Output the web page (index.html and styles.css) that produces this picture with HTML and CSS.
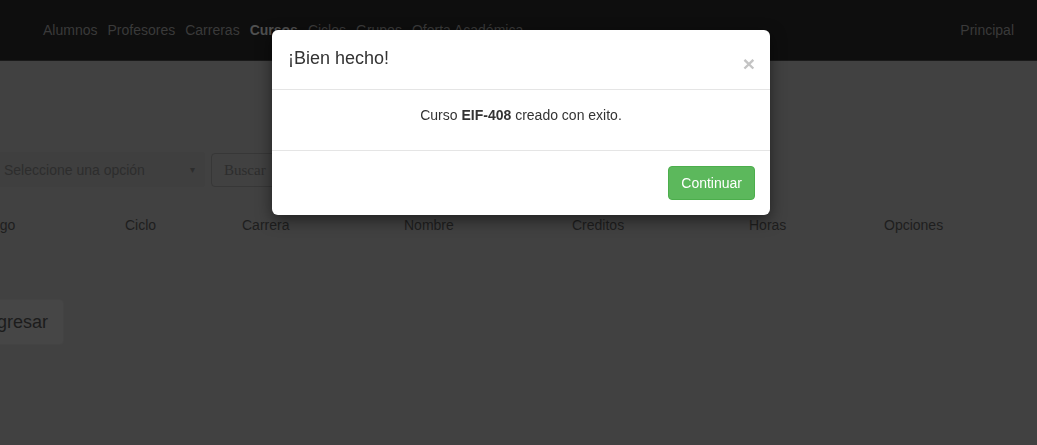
FILE: index.html
```html
<!DOCTYPE html>
<html lang="es">
<head>
<meta charset="utf-8">
<title>Cursos</title>
<link rel="stylesheet" href="styles.css">
</head>
<body>
<nav class="navbar">
  <ul class="nav-links">
    <li><a href="#">Alumnos</a></li>
    <li><a href="#">Profesores</a></li>
    <li><a href="#">Carreras</a></li>
    <li><a href="#" class="active">Cursos</a></li>
    <li><a href="#">Ciclos</a></li>
    <li><a href="#">Grupos</a></li>
    <li><a href="#">Oferta Académica</a></li>
  </ul>
  <a href="#" class="nav-right">Principal</a>
</nav>

<main class="content">
  <div class="search-row">
    <div class="select">
      <span>Seleccione una opción</span>
      <span class="caret">▾</span>
    </div>
    <div class="search-input">Buscar</div>
  </div>

  <div class="table-head">
    <span>Codigo</span>
    <span>Ciclo</span>
    <span>Carrera</span>
    <span>Nombre</span>
    <span>Creditos</span>
    <span>Horas</span>
    <span>Opciones</span>
  </div>

  <div class="actions">
    <button class="btn-back">Regresar</button>
  </div>
</main>

<div class="modal">
  <div class="modal-header">
    <h4 class="modal-title">¡Bien hecho!</h4>
    <span class="close">×</span>
  </div>
  <div class="modal-body">
    <p>Curso <b>EIF-408</b> creado con exito.</p>
  </div>
  <div class="modal-footer">
    <button class="btn-success">Continuar</button>
  </div>
</div>
</body>
</html>
```

FILE: styles.css
```css
* { box-sizing: border-box; }

html, body {
  margin: 0;
  height: 100%;
  overflow: hidden;
}

body {
  background: #414141;
  font-family: "Liberation Sans", Arial, sans-serif;
  font-size: 14px;
  line-height: 20px;
  color: #1c1c1c;
}

.navbar {
  height: 61px;
  background: #0e0e0e;
  border-bottom: 1px solid #1a1a1a;
  display: flex;
  align-items: center;
  justify-content: space-between;
  padding: 0 18px 0 38px;
}

.nav-links {
  list-style: none;
  margin: 0;
  padding: 0;
  display: flex;
}

.nav-links a,
.nav-right {
  display: block;
  padding: 0 5px;
  color: #3a3a3a;
  text-decoration: none;
}

.nav-links a.active {
  color: #505050;
  font-weight: bold;
}

.content {
  margin-left: -37px;
  padding-top: 91px;
}

.search-row {
  display: flex;
  gap: 6px;
  padding-left: 29px;
}

.select {
  width: 213px;
  height: 35px;
  display: flex;
  align-items: center;
  justify-content: space-between;
  padding: 0 10px 0 12px;
  color: #2d2d2d;
  background: #3f3f3f;
  border-radius: 4px;
}

.caret {
  font-size: 10px;
  color: #2d2d2d;
}

.search-input {
  width: 300px;
  height: 34px;
  margin-top: 1px;
  border: 1px solid #373737;
  border-radius: 4px;
  padding: 6px 12px;
  color: #2d2d2d;
  font-family: "Liberation Serif", serif;
  font-size: 15px;
}

.table-head {
  display: grid;
  grid-template-columns: 154px 117px 162px 168px 177px 135px 120px;
  padding-top: 28px;
  color: #1e1e1e;
}

.table-head span {
  padding: 0 8px;
}

.actions {
  padding-top: 64px;
  margin-left: -6px;
}

.btn-back {
  font-family: inherit;
  font-size: 18px;
  line-height: 24px;
  padding: 10px 15px 10px 16px;
  color: #1c1c1c;
  background: #464646;
  border: 1px solid #434343;
  border-radius: 4px;
}

.modal {
  position: fixed;
  top: 30px;
  left: 272px;
  width: 498px;
  background: #fff;
  border-radius: 6px;
  box-shadow: 0 5px 15px rgba(0, 0, 0, 0.5);
  color: #333;
}

.modal-header {
  display: flex;
  justify-content: space-between;
  align-items: flex-start;
  padding: 15px 15px 15px 16px;
  border-bottom: 1px solid #e5e5e5;
}

.modal-title {
  margin: 0;
  font-size: 18px;
  font-weight: normal;
  line-height: 26px;
}

.close {
  font-size: 21px;
  font-weight: bold;
  line-height: 1;
  color: #c4c4c4;
  margin-top: 8px;
}

.modal-body {
  padding: 15px;
  text-align: center;
}

.modal-body p {
  margin: 0 0 10px;
}

.modal-footer {
  display: flex;
  justify-content: flex-end;
  padding: 15px;
  border-top: 1px solid #e5e5e5;
}

.btn-success {
  font-family: inherit;
  font-size: 14px;
  line-height: 20px;
  padding: 6px 12px;
  height: 34px;
  color: #fff;
  background: #5cb85c;
  border: 1px solid #4cae4c;
  border-radius: 4px;
}
```
